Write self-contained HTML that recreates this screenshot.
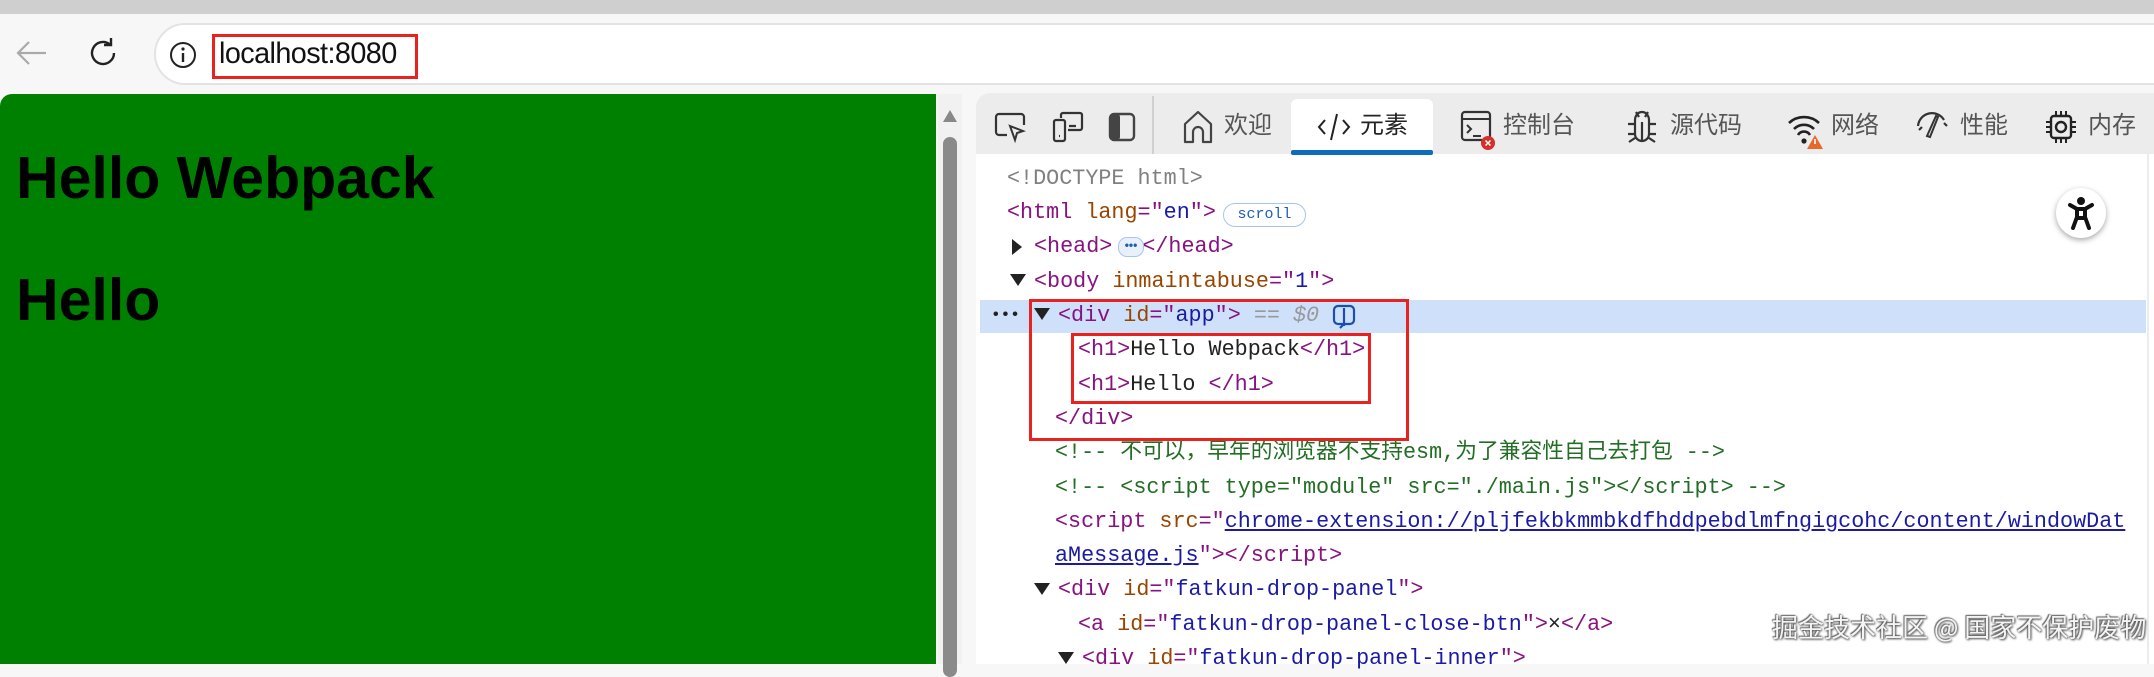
<!DOCTYPE html>
<html><head><meta charset="utf-8"><style>
*{margin:0;padding:0;box-sizing:border-box}
body{width:2154px;height:664px;overflow:hidden;background:#f7f7f7;position:relative;font-family:"Liberation Sans","Noto Sans CJK SC",sans-serif}
.abs{position:absolute}
.code{position:absolute;font-family:"Liberation Mono","Noto Sans CJK SC",monospace;font-size:21.75px;white-space:pre;line-height:30px;color:#881280}
.t{color:#881280}.an{color:#994500}.av{color:#1a1aa6}.cm{color:#236e25}.gr{color:#808080}
.tab{position:absolute;top:110px;font-size:24px;color:#555;font-family:"Liberation Sans","Noto Sans CJK SC",sans-serif;line-height:32px}
svg{position:absolute}
</style></head><body>
<div class="abs" style="left:0;top:0;width:2154px;height:14px;background:#cfcfcf"></div>
<svg style="left:14px;top:38px" width="34" height="30" viewBox="0 0 34 30"><path d="M32 15H4M15 4L4 15l11 11" stroke="#aaa" stroke-width="2.2" fill="none"/></svg>
<svg style="left:88px;top:36px" width="32" height="34" viewBox="0 0 32 34"><path d="M26 17a11 11 0 1 1-4-8.5M23 2v7h-7" stroke="#222" stroke-width="2.4" fill="none"/></svg>
<div class="abs" style="left:154px;top:23px;width:2100px;height:62px;border-radius:31px;background:#fff;border:2px solid #e3e3e3"></div>
<svg style="left:169px;top:41px" width="28" height="28" viewBox="0 0 28 28"><circle cx="14" cy="14" r="12" stroke="#222" stroke-width="2" fill="none"/><path d="M14 12v9" stroke="#222" stroke-width="2.4"/><circle cx="14" cy="8" r="1.6" fill="#222"/></svg>
<div class="abs" style="left:219px;top:37px;font-size:30px;color:#111;letter-spacing:-0.6px;transform:scaleX(0.96);transform-origin:left">localhost:8080</div>
<div class="abs" style="left:212px;top:34px;width:206px;height:45px;border:3px solid #e8231f"></div>
<div class="abs" style="left:0;top:94px;width:936px;height:570px;background:#008000;border-top-left-radius:12px"></div>
<div class="abs" style="left:16px;top:146px;font-size:59px;font-weight:bold;color:#000;line-height:64px">Hello Webpack</div>
<div class="abs" style="left:16px;top:268px;font-size:59px;font-weight:bold;color:#000;line-height:64px">Hello</div>
<div class="abs" style="left:938px;top:94px;width:24px;height:570px;background:#f1f1f1"></div>
<svg style="left:941px;top:108px" width="18" height="16"><path d="M9 2L16 14H2z" fill="#888"/></svg>
<div class="abs" style="left:943px;top:137px;width:14px;height:540px;border-radius:7px;background:#8a8a8a"></div>
<div class="abs" style="left:976px;top:93px;width:1178px;height:571px;background:#fff;border-top-left-radius:14px;overflow:hidden">
 <div class="abs" style="left:0;top:0;width:1178px;height:61px;background:#ececec"></div>
</div>
<div class="abs" style="left:1152px;top:96px;width:2px;height:58px;background:#d0d0d0"></div>
<svg style="left:993px;top:109px" width="36" height="36" viewBox="0 0 36 36"><path d="M14 26H6a3 3 0 0 1-3-3V8a3 3 0 0 1 3-3h22a3 3 0 0 1 3 3v8" stroke="#333" stroke-width="2.2" fill="none"/><path d="M17 17l13 5-6 2-2 7z" stroke="#333" stroke-width="2" fill="none"/></svg>
<svg style="left:1050px;top:109px" width="36" height="36" viewBox="0 0 36 36"><rect x="4" y="11" width="11" height="21" rx="2" stroke="#333" stroke-width="2.2" fill="none"/><path d="M11 9V6a2 2 0 0 1 2-2h17a2 2 0 0 1 2 2v13a2 2 0 0 1-2 2H18M19 17h7" stroke="#333" stroke-width="2.2" fill="none"/><path d="M9 27h1" stroke="#333" stroke-width="2.2"/></svg>
<svg style="left:1106px;top:109px" width="32" height="36" viewBox="0 0 32 36"><rect x="4" y="5" width="24" height="26" rx="4" stroke="#444" stroke-width="2.4" fill="none"/><rect x="4" y="5" width="10" height="26" rx="3" fill="#444"/></svg>
<svg style="left:1180px;top:108px" width="36" height="38" viewBox="0 0 36 38"><path d="M5 34V16L18 4l13 12v18h-8V24a5 5 0 0 0-10 0v10z" stroke="#444" stroke-width="2.2" fill="none" stroke-linejoin="round"/></svg>
<div class="tab" style="left:1224px">欢迎</div>
<div class="abs" style="left:1291px;top:99px;width:142px;height:56px;background:#fff;border-radius:6px 6px 0 0"></div>
<div class="abs" style="left:1291px;top:150px;width:142px;height:5px;background:#0f6cbd;border-radius:2px"></div>
<svg style="left:1316px;top:108px" width="36" height="38" viewBox="0 0 36 38"><path d="M9 12L3 19l6 7M27 12l6 7-6 7M21 6L15 32" stroke="#222" stroke-width="2" fill="none"/></svg>
<div class="tab" style="left:1360px;color:#222">元素</div>
<svg style="left:1459px;top:108px" width="40" height="44" viewBox="0 0 40 44"><rect x="3" y="4" width="28" height="28" rx="3" stroke="#333" stroke-width="2.2" fill="none"/><path d="M3 11h28M8 17l4 4-4 4M14 28h8" stroke="#333" stroke-width="2" fill="none"/><circle cx="29" cy="35" r="7" fill="#d62d2d"/><path d="M26.5 32.5l5 5M31.5 32.5l-5 5" stroke="#fff" stroke-width="1.5"/></svg>
<div class="tab" style="left:1503px">控制台</div>
<svg style="left:1625px;top:108px" width="34" height="38" viewBox="0 0 34 38"><path d="M11 4l3 5M23 4l-3 5M10 12a7 8 0 0 1 14 0v14a7 7 0 0 1-14 0zM17 14v19M3 16h7M24 16h7M3 26h7M24 26h7M4 34l6-4M30 34l-6-4" stroke="#333" stroke-width="2.2" fill="none"/></svg>
<div class="tab" style="left:1670px">源代码</div>
<svg style="left:1786px;top:108px" width="40" height="44" viewBox="0 0 40 44"><path d="M3 15a22 22 0 0 1 30 0M8 21a14 14 0 0 1 20 0M12 27a7 7 0 0 1 12 0" stroke="#222" stroke-width="2.6" fill="none"/><circle cx="18" cy="33" r="2.6" fill="#222"/><path d="M29 27l8 14H21z" fill="#e8692b"/><path d="M29 31v5" stroke="#fff" stroke-width="1.6"/></svg>
<div class="tab" style="left:1831px">网络</div>
<svg style="left:1914px;top:110px" width="38" height="34" viewBox="0 0 38 34"><path d="M4 16a14 14 0 0 1 26-6M5 20l3-3M33 16l-3-3" stroke="#333" stroke-width="2.2" fill="none"/><path d="M24 7L16 27l-3-1 9-20z" stroke="#333" stroke-width="2" fill="none"/></svg>
<div class="tab" style="left:1960px">性能</div>
<svg style="left:2043px;top:108px" width="36" height="38" viewBox="0 0 36 38"><rect x="8" y="8" width="20" height="22" rx="3" stroke="#222" stroke-width="2.4" fill="none"/><circle cx="18" cy="19" r="5" stroke="#222" stroke-width="2.4" fill="none"/><path d="M13 3v5M18 3v5M23 3v5M13 30v5M18 30v5M23 30v5M3 14h5M3 19h5M3 24h5M28 14h5M28 19h5M28 24h5" stroke="#222" stroke-width="2"/></svg>
<div class="tab" style="left:2088px">内存</div>
<div class="abs" style="left:980px;top:300px;width:1166px;height:33px;background:#cfe0fb"></div>
<div class="abs" style="left:2147px;top:154px;width:2px;height:510px;background:#ececec"></div>
<div class="code" style="left:991px;top:300px;color:#222;font-weight:bold;font-size:16px">•••</div>
<div class="code gr" style="left:1007px;top:164px">&lt;!DOCTYPE html&gt;</div>
<div class="code" style="left:1007px;top:198px">&lt;html <span class="an">lang</span>="<span class="av">en</span>"&gt;</div>
<div class="abs" style="left:1223px;top:203px;width:83px;height:24px;border:1.5px solid #a8c4ec;border-radius:12px;font-family:'Liberation Mono',monospace;font-size:15px;color:#1a5fb4;text-align:center;line-height:21px">scroll</div>
<svg style="left:1010px;top:238px" width="14" height="18"><path d="M2 1l10 8-10 8z" fill="#222"/></svg>
<div class="code" style="left:1034px;top:232px">&lt;head&gt;<span style="display:inline-block;width:30px"></span>&lt;/head&gt;</div>
<div class="abs" style="left:1118px;top:237px;width:26px;height:20px;border:1.5px solid #a8c4ec;border-radius:9px;background:#e8f0fc;font-size:12px;color:#1a5fb4;text-align:center;line-height:15px;font-weight:bold">•••</div>
<svg style="left:1009px;top:273px" width="18" height="14"><path d="M1 1h16L9 13z" fill="#222"/></svg>
<div class="code" style="left:1034px;top:267px">&lt;body <span class="an">inmaintabuse</span>="<span class="av">1</span>"&gt;</div>
<svg style="left:1033px;top:307px" width="18" height="14"><path d="M1 1h16L9 13z" fill="#222"/></svg>
<div class="code" style="left:1058px;top:301px">&lt;div <span class="an">id</span>="<span class="av">app</span>"&gt; <span style="color:#999;font-style:italic">== $0</span></div>
<svg style="left:1330px;top:302px" width="28" height="30" viewBox="0 0 28 30"><path d="M8 4h12a4 4 0 0 1 4 4v10a4 4 0 0 1-4 4H8a4 4 0 0 1-4-4V8a4 4 0 0 1 4-4zM14 6v18M10 26l4-4" stroke="#1a4fb0" stroke-width="2.2" fill="none"/></svg>
<div class="code" style="left:1078px;top:335px">&lt;h1&gt;<span style="color:#222">Hello Webpack</span>&lt;/h1&gt;</div>
<div class="code" style="left:1078px;top:370px">&lt;h1&gt;<span style="color:#222">Hello </span>&lt;/h1&gt;</div>
<div class="code" style="left:1055px;top:404px">&lt;/div&gt;</div>
<div class="code cm" style="left:1055px;top:438px">&lt;!-- 不可以，早年的浏览器不支持esm,为了兼容性自己去打包 --&gt;</div>
<div class="code cm" style="left:1055px;top:473px">&lt;!-- &lt;script type="module" src="./main.js"&gt;&lt;/script&gt; --&gt;</div>
<div class="code" style="left:1055px;top:507px">&lt;script <span class="an">src</span>="<span class="av" style="text-decoration:underline;color:#1a1aa6">chrome-extension://pljfekbkmmbkdfhddpebdlmfngigcohc/content/windowDat</span></div>
<div class="code" style="left:1055px;top:541px"><span class="av" style="text-decoration:underline">aMessage.js</span>"&gt;&lt;/script&gt;</div>
<svg style="left:1033px;top:582px" width="18" height="14"><path d="M1 1h16L9 13z" fill="#222"/></svg>
<div class="code" style="left:1058px;top:575px">&lt;div <span class="an">id</span>="<span class="av">fatkun-drop-panel</span>"&gt;</div>
<div class="code" style="left:1078px;top:610px">&lt;a <span class="an">id</span>="<span class="av">fatkun-drop-panel-close-btn</span>"&gt;<span style="color:#222">×</span>&lt;/a&gt;</div>
<svg style="left:1057px;top:651px" width="18" height="14"><path d="M1 1h16L9 13z" fill="#222"/></svg>
<div class="code" style="left:1082px;top:644px">&lt;div <span class="an">id</span>="<span class="av">fatkun-drop-panel-inner</span>"&gt;</div>
<div class="abs" style="left:1029px;top:299px;width:380px;height:142px;border:3px solid #e8231f"></div>
<div class="abs" style="left:1071px;top:333px;width:300px;height:71px;border:3px solid #e8231f"></div>
<div class="abs" style="left:2056px;top:188px;width:50px;height:50px;border-radius:25px;background:#fff;box-shadow:0 2px 6px rgba(0,0,0,.35)"></div>
<svg style="left:2066px;top:196px" width="30" height="34" viewBox="0 0 30 34"><circle cx="15" cy="5" r="4" fill="#111"/><path d="M4 9l7 4v8l-4 11M26 9l-7 4v8l4 11M11 13h8v9h-8z" stroke="#111" stroke-width="4" fill="none" stroke-linecap="round" stroke-linejoin="round"/></svg>
<div class="abs" style="left:1772px;top:608px;font-size:26px;color:#f4f4f4;font-family:'Noto Sans CJK SC',sans-serif;text-shadow:0 0 2px #555,1px 1px 2px #555,-1px -1px 1px #777">掘金技术社区 @ 国家不保护废物</div>
</body></html>
